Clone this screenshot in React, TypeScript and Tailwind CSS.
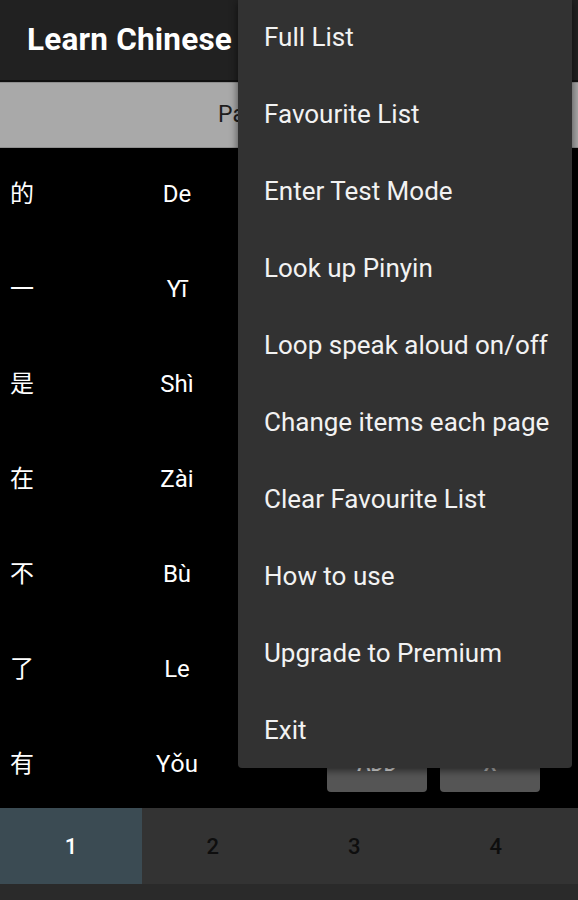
import React from 'react';

const words = [
  { hanzi: '的', pinyin: 'De' },
  { hanzi: '一', pinyin: 'Yī' },
  { hanzi: '是', pinyin: 'Shì' },
  { hanzi: '在', pinyin: 'Zài' },
  { hanzi: '不', pinyin: 'Bù' },
  { hanzi: '了', pinyin: 'Le' },
  { hanzi: '有', pinyin: 'Yǒu' },
];

const menuItems = [
  'Full List',
  'Favourite List',
  'Enter Test Mode',
  'Look up Pinyin',
  'Loop speak aloud on/off',
  'Change items each page',
  'Clear Favourite List',
  'How to use',
  'Upgrade to Premium',
  'Exit',
];

const font = { fontFamily: 'Roboto, "Noto Sans CJK SC", sans-serif' };

export default function App() {
  return (
    <div
      className="relative w-[578px] h-[900px] overflow-hidden bg-black text-white"
      style={font}
    >
      {/* app bar */}
      <div className="h-[80px] bg-[#212121] flex items-center pl-[27px]">
        <h1 className="text-[31.5px] font-bold tracking-[0.2px]">Learn Chinese</h1>
      </div>
      <div className="h-[2px] bg-[#111]" />

      {/* page indicator */}
      <div className="h-[66px] bg-[#a9a9a9] border-y border-[#8e8e8e] flex items-center pl-[218px]">
        <span className="text-[23px] text-[#1e1e1e]">Page 1 of 100</span>
      </div>

      {/* word rows */}
      <div className="h-[660px] overflow-hidden">
        {words.map((w) => (
          <div key={w.hanzi} className="h-[95px] flex items-center first:-mt-[2px]">
            <div className="w-[95px] pl-[10px] text-[24px] leading-none">{w.hanzi}</div>
            <div className="w-[164px] text-center text-[24px]">{w.pinyin}</div>
            <div className="flex gap-[13px] ml-[68px]">
              <button className="w-[100px] h-[56px] rounded-[4px] bg-[#555] text-[#eee] text-[20px] font-medium">
                ADD
              </button>
              <button className="w-[100px] h-[56px] rounded-[4px] bg-[#555] text-[#bbb] text-[20px] font-medium">
                X
              </button>
            </div>
          </div>
        ))}
      </div>

      {/* page tabs */}
      <div className="h-[76px] flex bg-[#333333]">
        {[1, 2, 3, 4].map((n) => (
          <div
            key={n}
            className={
              n === 1
                ? 'w-[142px] flex items-center justify-center bg-[#3b4b53] text-white text-[22px] font-medium'
                : 'w-[141.5px] flex items-center justify-center text-[#0e0e0e] text-[22px] font-medium'
            }
          >
            {n}
          </div>
        ))}
      </div>
      <div className="h-[16px] bg-[#2a2a2a]" />

      {/* overflow menu */}
      <div className="absolute top-0 left-[238px] w-[334px] h-[768px] bg-[#323232] rounded-b-[4px] shadow-[0_2px_8px_rgba(0,0,0,0.6)] overflow-hidden">
        {menuItems.map((item) => (
          <div
            key={item}
            className="h-[77px] flex items-center pl-[26px] text-[26px] text-[#f2f2f2] -translate-y-[1.5px]"
          >
            {item}
          </div>
        ))}
      </div>
    </div>
  );
}
